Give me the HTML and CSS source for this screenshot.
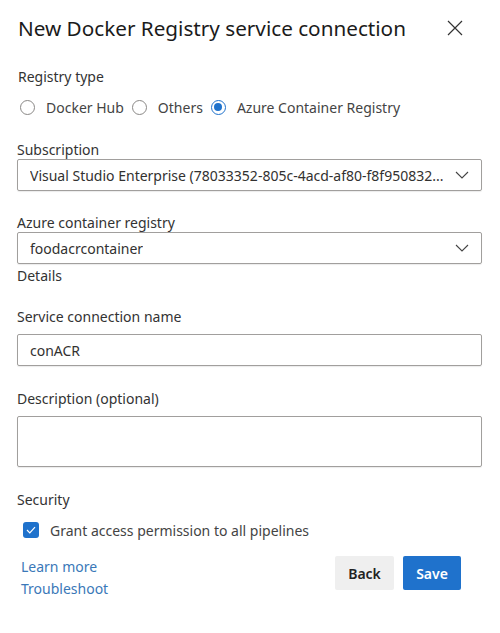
FILE: index.html
```html
<!DOCTYPE html>
<html lang="en">
<head>
<meta charset="utf-8">
<title>New Docker Registry service connection</title>
<link rel="stylesheet" href="styles.css">
</head>
<body>
<div class="panel">
  <div class="header">
    <h1 class="title">New Docker Registry service connection</h1>
    <svg class="close" width="16" height="16" viewBox="0 0 16 16"><path d="M1 1 L15 15 M15 1 L1 15" stroke="#333" stroke-width="1.2" fill="none"/></svg>
  </div>

  <div class="group-label">Registry type</div>
  <div class="radios">
    <span class="radio"></span><span class="radio-text">Docker Hub</span>
    <span class="radio"></span><span class="radio-text">Others</span>
    <span class="radio checked"></span><span class="radio-text">Azure Container Registry</span>
  </div>

  <div class="field-label first">Subscription</div>
  <div class="select">
    <span class="select-text">Visual Studio Enterprise (78033352-805c-4acd-af80-f8f950832...</span>
    <svg class="chev" width="14" height="8" viewBox="0 0 14 8"><path d="M1 1 L7 7 L13 1" stroke="#444" stroke-width="1.1" fill="none"/></svg>
  </div>

  <div class="field-label">Azure container registry</div>
  <div class="select">
    <span class="select-text">foodacrcontainer</span>
    <svg class="chev" width="14" height="8" viewBox="0 0 14 8"><path d="M1 1 L7 7 L13 1" stroke="#444" stroke-width="1.1" fill="none"/></svg>
  </div>
  <div class="details">Details</div>

  <div class="field-label">Service connection name</div>
  <div class="input">conACR</div>

  <div class="field-label spaced">Description (optional)</div>
  <div class="textarea"></div>

  <div class="field-label spaced">Security</div>
  <div class="check-row">
    <span class="checkbox"><svg width="10" height="8" viewBox="0 0 10 8"><path d="M1 4 L3.8 6.8 L9 1.2" stroke="#fff" stroke-width="1.2" fill="none"/></svg></span>
    <span class="check-text">Grant access permission to all pipelines</span>
  </div>

  <div class="footer">
    <div class="links">
      <a class="link">Learn more</a>
      <a class="link">Troubleshoot</a>
    </div>
    <div class="buttons">
      <button class="btn back">Back</button>
      <button class="btn save">Save</button>
    </div>
  </div>
</div>
</body>
</html>
```
FILE: styles.css
```css
html, body {
  margin: 0;
  padding: 0;
  background: #ffffff;
}
body {
  font-family: "Noto Sans", "Open Sans", sans-serif;
  font-size: 14px;
  color: #333333;
}
.panel {
  padding: 12px 18px 0 17px;
  width: 465px;
}
.header {
  display: flex;
  align-items: center;
  justify-content: space-between;
  height: 32px;
}
.title {
  margin: 0 0 0 1px;
  font-size: 20.7px;
  font-weight: 400;
  color: #1b1b1b;
  line-height: 32px;
}
.close {
  margin-right: 19px;
}
.group-label {
  margin-top: 23px;
  margin-left: 1px;
  line-height: 20px;
  color: #333;
}
.radios {
  display: flex;
  align-items: center;
  margin-top: 10px;
  height: 20px;
  margin-left: 3px;
}
.radio {
  width: 15px;
  height: 15px;
  border: 1px solid #8a8886;
  border-radius: 50%;
  box-sizing: border-box;
  margin-right: 11px;
  position: relative;
}
.radio.checked {
  border-color: #1f72cc;
  border-width: 1.5px;
}
.radio.checked::after {
  content: "";
  position: absolute;
  left: 2px;
  top: 2px;
  width: 8px;
  height: 8px;
  border-radius: 50%;
  background: #1f72cc;
}
.radio-text {
  margin-right: 8px;
  color: #444;
}
.field-label {
  margin-top: 23px;
  line-height: 18px;
  color: #333;
}
.field-label.first {
  margin-top: 24px;
}
.field-label.spaced {
  margin-top: 24px;
}
.select, .input {
  height: 32px;
  box-sizing: border-box;
  border: 1px solid #a19f9d;
  border-radius: 2px;
  display: flex;
  align-items: center;
  justify-content: space-between;
  padding: 0 12px 0 12px;
  color: #323130;
  box-shadow: 0 1px 1px rgba(0,0,0,0.08);
}
.select-text {
  white-space: nowrap;
  overflow: hidden;
}
.chev {
  flex: none;
  margin-left: 8px;
}
.details {
  margin-top: 3px;
  line-height: 18px;
  color: #333;
}
.input {
  margin-top: 8px;
}
.textarea {
  margin-top: 8px;
  height: 51px;
  box-sizing: border-box;
  border: 1px solid #a19f9d;
  border-radius: 2px;
  box-shadow: 0 1px 1px rgba(0,0,0,0.08);
}
.check-row {
  display: flex;
  align-items: center;
  height: 20px;
  margin-top: 11px;
  margin-left: 6px;
}
.checkbox {
  width: 16px;
  height: 16px;
  border-radius: 3px;
  background: #1f72cc;
  display: flex;
  align-items: center;
  justify-content: center;
  margin-right: 11px;
}
.check-text {
  color: #444;
}
.footer {
  display: flex;
  justify-content: space-between;
  align-items: flex-start;
  margin-top: 16px;
  padding-left: 4px;
  padding-right: 21px;
}
.links {
  display: flex;
  flex-direction: column;
  gap: 1px;
}
.link {
  color: #3a78b8;
  line-height: 21px;
}
.buttons {
  display: flex;
  gap: 9px;
}
.btn {
  height: 34px;
  border: none;
  border-radius: 2px;
  font-family: inherit;
  font-size: 14px;
  font-weight: 600;
  padding: 0 13px;
}
.back {
  background: #efefef;
  color: #222;
  width: 59px;
}
.save {
  background: #1f72cc;
  color: #fff;
  width: 58px;
}
```
